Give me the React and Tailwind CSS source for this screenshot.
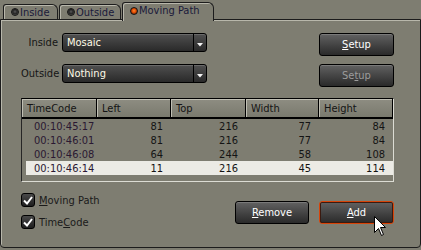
import React from 'react';

const rows = [
  ['00:10:45:17', 81, 216, 77, 84],
  ['00:10:46:01', 81, 216, 77, 84],
  ['00:10:46:08', 64, 244, 58, 108],
  ['00:10:46:14', 11, 216, 45, 114],
];

function Led({ active }) {
  return (
    <span
      className={
        'inline-block w-[8px] h-[8px] rounded-full border border-[#141414] mr-[1px] ' +
        (active
          ? 'bg-[radial-gradient(circle_at_50%_45%,#ff8a30_0,#e04a00_45%,#3a1a0a_100%)]'
          : 'bg-[radial-gradient(circle_at_50%_45%,#5a5a5a_0,#222_50%,#8a8a80_100%)]')
      }
    />
  );
}

function Tab({ label, active, w }) {
  if (active) {
    return (
      <div
        className={`${w} h-[19px] -mb-[2px] ml-[1px] relative z-10 bg-[#7e7d71] border border-b-0 border-[#1c1c1c] rounded-tl-[3px] rounded-tr-[6px] shadow-[inset_1px_1px_0_#b8b7ab] flex items-center pl-[7px] pb-[3px] text-[#1a1a3a]`}
      >
        <Led active />
        <span>{label}</span>
      </div>
    );
  }
  return (
    <div
      className={`${w} h-[15px] ml-[1px] bg-[#7e7d71] border border-b-0 border-[#1c1c1c] rounded-tl-[3px] rounded-tr-[6px] shadow-[inset_1px_1px_0_#b8b7ab] flex items-center pl-[7px] text-[#1a1a3a]`}
    >
      <Led />
      <span>{label}</span>
    </div>
  );
}

function Dropdown({ value }) {
  return (
    <div className="w-[145px] h-[19px] flex rounded-[3px] border border-black bg-gradient-to-b from-[#505050] to-[#2a2a2a] shadow-[inset_0_1px_0_#6a6a6a]">
      <div className="flex-1 flex items-center pl-[4px] text-[#fffbe6]">{value}</div>
      <div className="w-[13px] border-l border-black flex items-end justify-center pb-[4px]">
        <svg width="6" height="4" viewBox="0 0 6 4">
          <path d="M0 0 H6 L3 3.5 Z" fill="#f4f4f4" />
        </svg>
      </div>
    </div>
  );
}

function Btn({ children, disabled, focus, w = 'w-[75px]' }) {
  return (
    <div
      className={
        `${w} h-[23px] rounded-[3px] flex items-center justify-center bg-gradient-to-b from-[#626262] to-[#2a2a2a] shadow-[inset_0_1px_0_#7a7a7a] ` +
        (focus ? 'border border-[#d84408] outline outline-1 outline-[#3a1a10] -outline-offset-2 ' : 'border border-black ') +
        (disabled ? 'text-[#9c9c9c]' : 'text-white')
      }
    >
      {children}
    </div>
  );
}

function Check({ children }) {
  return (
    <div className="flex items-center h-[14px]">
      <div className="w-[14px] h-[14px] rounded-[3px] border border-black bg-gradient-to-b from-[#4a4a4a] to-[#1e1e1e] flex items-center justify-center">
        <svg width="10" height="9" viewBox="0 0 10 9">
          <path d="M1 4.5 L4 7.5 L9 1" fill="none" stroke="white" strokeWidth="2" />
        </svg>
      </div>
      <span className="ml-[4px] text-[#1a1a1a]">{children}</span>
    </div>
  );
}

export default function App() {
  return (
    <div className="w-[421px] h-[250px] bg-[#7e7d71] relative overflow-hidden font-['DejaVu_Sans_Condensed','Liberation_Sans',Arial,sans-serif] text-[11px] leading-none">
      {/* tabs */}
      <div className="h-[19px] flex items-end pl-[2px]">
        <Tab label="Inside" w="w-[55px]" />
        <Tab label="Outside" w="w-[62px]" />
        <Tab label="Moving Path" w="w-[92px]" active />
      </div>

      {/* panel */}
      <div className="w-[421px] h-[229px] border border-[#1c1c1c] rounded-b-[4px] shadow-[inset_1px_1px_0_#b8b7ab] pt-[13px] pl-[20px] pr-[26px]">
        <div className="flex items-start justify-between">
          <div className="flex items-center">
            <span className="w-[37px] text-right whitespace-nowrap text-[#151515]">Inside</span>
            <div className="ml-[4px]">
              <Dropdown value="Mosaic" />
            </div>
          </div>
          <Btn>
            <span><u>S</u>etup</span>
          </Btn>
        </div>

        <div className="flex items-start justify-between mt-[8px]">
          <div className="flex items-center">
            <span className="w-[37px] text-right whitespace-nowrap text-[#151515]">Outside</span>
            <div className="ml-[4px]">
              <Dropdown value="Nothing" />
            </div>
          </div>
          <Btn disabled>
            <span>Se<u>t</u>up</span>
          </Btn>
        </div>

        {/* list */}
        <div className="mt-[11px] w-[373px] h-[84px] border-l border-t border-l-[#262626] border-t-black border-r border-b border-r-[#dcdcd4] border-b-[#dcdcd4] overflow-hidden">
          <div className="grid grid-cols-[75px_74px_75px_73px_74px] h-[20px] border-b-2 border-black bg-gradient-to-b from-[#8e8d82] to-[#7a7a6e]">
            {['TimeCode', 'Left', 'Top', 'Width', 'Height'].map((h) => (
              <div
                key={h}
                className="border-r border-black shadow-[inset_1px_1px_0_#c0bfb4] flex items-center pl-[5px] text-[#141414]"
              >
                {h}
              </div>
            ))}
          </div>
          <div className="pl-[4px]">
            {rows.map((r, i) => (
              <div
                key={r[0]}
                className={
                  'grid grid-cols-[70px_74px_75px_73px_74px] h-[14px] items-center ' +
                  (i === 3 ? 'bg-[#ecebe5]' : '')
                }
              >
                <span className="pl-[8px] text-[#2a1832]">{r[0]}</span>
                {r.slice(1).map((v, j) => (
                  <span key={j} className="text-right pr-[7px] text-[#141414]">
                    {v}
                  </span>
                ))}
              </div>
            ))}
          </div>
        </div>

        {/* bottom */}
        <div className="mt-[11px] flex items-start justify-between">
          <div className="flex flex-col gap-[8px]">
            <Check>
              <u>M</u>oving Path
            </Check>
            <Check>
              Time<u>C</u>ode
            </Check>
          </div>
          <div className="mt-[8px] flex gap-[10px]">
            <Btn w="w-[74px]">
              <span><u>R</u>emove</span>
            </Btn>
            <Btn focus>
              <span><u>A</u>dd</span>
            </Btn>
          </div>
        </div>
      </div>

      {/* mouse cursor */}
      <svg className="absolute left-[374px] top-[216px]" width="13" height="21" viewBox="0 0 13 21">
        <path
          d="M0.5 0.5 L0.5 16.5 L4.5 12.5 L7.5 19.5 L9.5 18.5 L6.5 11.5 L11.5 11.5 Z"
          fill="white"
          stroke="black"
          strokeWidth="1"
        />
      </svg>
    </div>
  );
}
